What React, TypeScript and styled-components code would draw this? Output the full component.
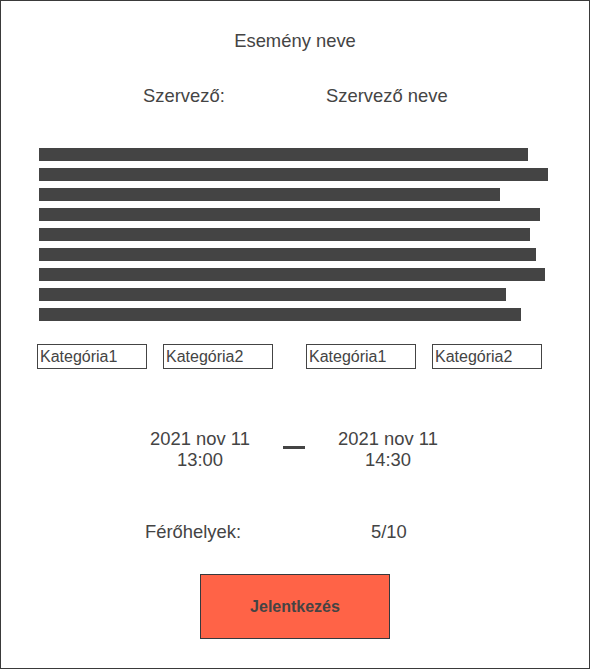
import React from "react";
import styled, { createGlobalStyle } from "styled-components";

const GlobalStyle = createGlobalStyle`
  html, body { margin: 0; padding: 0; background: #ffffff; }
  body { font-family: "Liberation Sans", Arial, sans-serif; color: #444444; }
`;

const Page = styled.div`
  box-sizing: border-box;
  width: 590px;
  height: 669px;
  border: 1px solid #3a3a3a;
  display: flex;
  flex-direction: column;
  align-items: stretch;
  background: #fff;
`;

const Title = styled.div`
  margin-top: 30px;
  font-size: 18.4px;
  line-height: 20px;
  text-align: center;
`;

const InfoRow = styled.div<{ $left: number; $labelWidth: number; $top: number }>`
  display: flex;
  margin-top: ${(p) => p.$top}px;
  padding-left: ${(p) => p.$left}px;
  font-size: 18.4px;
  line-height: 20px;
  & > span:first-child {
    width: ${(p) => p.$labelWidth}px;
    flex: none;
  }
`;

const Bars = styled.div`
  display: flex;
  flex-direction: column;
  gap: 7px;
  margin-top: 42px;
  padding-left: 38px;
`;

const Bar = styled.div`
  height: 13px;
  background: #444444;
`;

const CategoryRow = styled.div`
  display: flex;
  gap: 33px;
  margin-top: 23px;
  padding-left: 36px;
`;

const CategoryGroup = styled.div`
  display: flex;
  gap: 16px;
`;

const Category = styled.div`
  box-sizing: border-box;
  width: 110px;
  height: 25px;
  border: 1px solid #444444;
  padding: 0 2px;
  font-size: 16px;
  line-height: 23px;
  white-space: nowrap;
`;

const DateRow = styled.div`
  display: flex;
  justify-content: center;
  align-items: center;
  gap: 23px;
  margin-top: 59px;
  padding-right: 2px;
`;

const DateBlock = styled.div`
  width: 120px;
  text-align: center;
  font-size: 18.4px;
  line-height: 21px;
`;

const Dash = styled.div`
  width: 22px;
  height: 3px;
  background: #444444;
  margin-bottom: 3px;
`;

const Button = styled.button`
  box-sizing: border-box;
  align-self: center;
  width: 190px;
  height: 65px;
  margin-top: 32px;
  background: #ff6347;
  border: 1px solid #36393d;
  border-radius: 0;
  font-family: "Liberation Sans", Arial, sans-serif;
  font-weight: bold;
  font-size: 16px;
  color: #444444;
  padding: 0;
`;

const barWidths = [489, 509, 461, 501, 491, 497, 506, 467, 482];

export default function App() {
  return (
    <>
      <GlobalStyle />
      <Page>
        <Title>Esemény neve</Title>
        <InfoRow $top={35} $left={142} $labelWidth={183}>
          <span>Szervező:</span>
          <span>Szervező neve</span>
        </InfoRow>
        <Bars>
          {barWidths.map((w, i) => (
            <Bar key={i} style={{ width: w }} />
          ))}
        </Bars>
        <CategoryRow>
          <CategoryGroup>
            <Category>Kategória1</Category>
            <Category>Kategória2</Category>
          </CategoryGroup>
          <CategoryGroup>
            <Category>Kategória1</Category>
            <Category>Kategória2</Category>
          </CategoryGroup>
        </CategoryRow>
        <DateRow>
          <DateBlock>
            2021 nov 11
            <br />
            13:00
          </DateBlock>
          <Dash />
          <DateBlock>
            2021 nov 11
            <br />
            14:30
          </DateBlock>
        </DateRow>
        <InfoRow $top={52} $left={144} $labelWidth={226}>
          <span>Férőhelyek:</span>
          <span>5/10</span>
        </InfoRow>
        <Button>Jelentkezés</Button>
      </Page>
    </>
  );
}
